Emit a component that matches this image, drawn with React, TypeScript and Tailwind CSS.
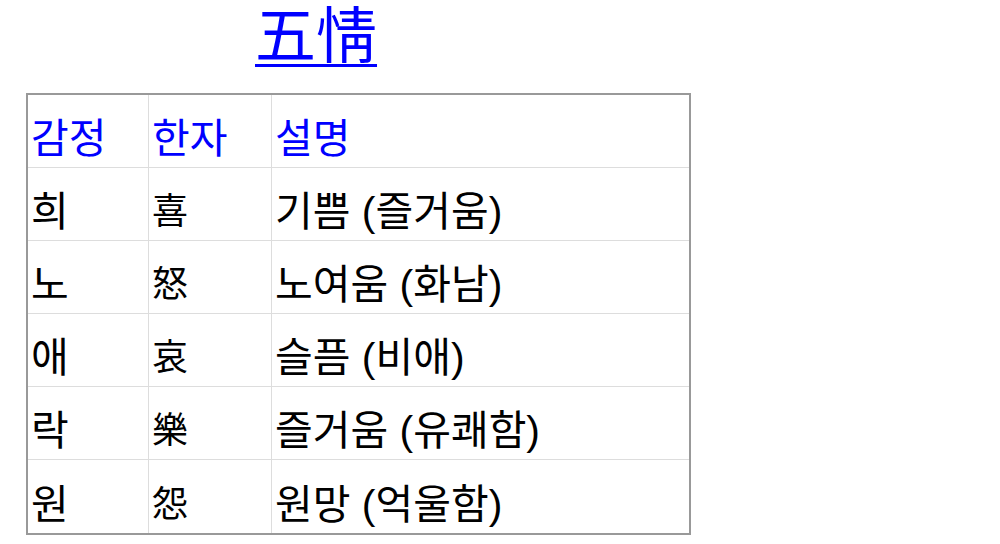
import React from "react";

const rows = [
  ["희", "喜", "기쁨 (즐거움)"],
  ["노", "怒", "노여움 (화남)"],
  ["애", "哀", "슬픔 (비애)"],
  ["락", "樂", "즐거움 (유쾌함)"],
  ["원", "怨", "원망 (억울함)"],
];

export default function App() {
  return (
    <div
      className="w-[1000px] h-[544px] bg-white overflow-hidden"
      style={{ fontFamily: '"Liberation Sans", "Noto Sans CJK KR", sans-serif' }}
    >
      <div className="pl-[255px] pt-[2px] h-[93px]">
        <a className="text-[61px] leading-[70px] text-[#0000ff] underline decoration-[3px] underline-offset-[6px]">五情</a>
      </div>
      <div className="ml-[26px] w-[665px] border-2 border-[#999]">
        <div className="flex h-[73px] border-b border-[#ddd]">
          <div className="w-[121px] border-r border-[#ddd] flex items-end pb-[3px] pl-[3px] text-[41px] leading-[50px] text-[#0000ff]">감정</div>
          <div className="w-[123px] border-r border-[#ddd] flex items-end pb-[3px] pl-[3px] text-[41px] leading-[50px] text-[#0000ff]">한자</div>
          <div className="flex-1 flex items-end pb-[3px] pl-[3px] text-[41px] leading-[50px] text-[#0000ff]">설명</div>
        </div>
        {rows.map((r, i) => (
          <div key={i} className={`flex h-[73px] ${i < rows.length - 1 ? "border-b border-[#ddd]" : ""}`}>
            <div className="w-[121px] border-r border-[#ddd] flex items-end pb-[3px] pl-[3px] text-[41px] leading-[50px] text-black">{r[0]}</div>
            <div className="w-[123px] border-r border-[#ddd] flex items-end pb-[3px] pl-[3px] text-[36px] leading-[50px] text-black">{r[1]}</div>
            <div className="flex-1 flex items-end pb-[3px] pl-[3px] text-[41px] leading-[50px] text-black">{r[2]}</div>
          </div>
        ))}
      </div>
    </div>
  );
}
